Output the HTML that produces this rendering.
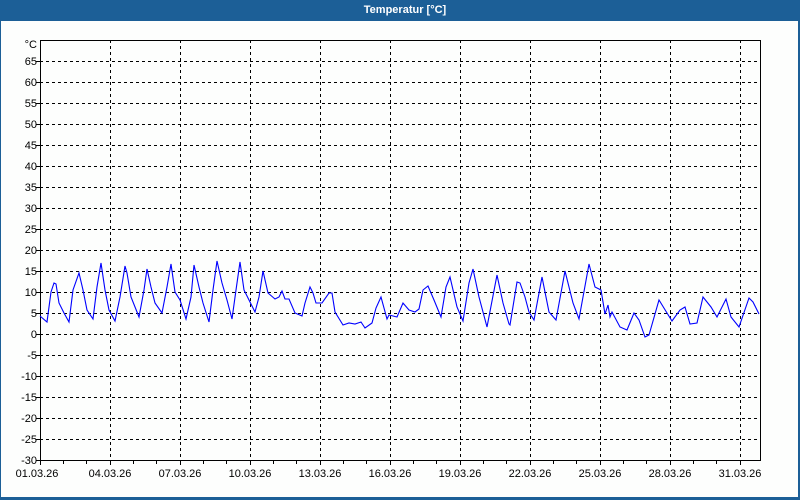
<!DOCTYPE html>
<html><head><meta charset="utf-8"><style>
html,body{margin:0;padding:0;background:#fff;}
svg{display:block;font-family:"Liberation Sans","DejaVu Sans",sans-serif;}
</style></head><body>
<svg width="800" height="500" viewBox="0 0 800 500" xmlns="http://www.w3.org/2000/svg">
<rect x="0" y="0" width="800" height="500" fill="#1c5f97"/>
<rect x="1" y="21" width="797" height="476" fill="#fdfefd"/>
<text x="405" y="13" fill="#fff" font-size="11" font-weight="bold" text-anchor="middle">Temperatur [°C]</text>
<g stroke="#000" stroke-width="1" stroke-dasharray="3,3" fill="none" shape-rendering="crispEdges">
<path d="M40 61.5H760M40 82.5H760M40 103.5H760M40 124.5H760M40 145.5H760M40 166.5H760M40 187.5H760M40 208.5H760M40 229.5H760M40 250.5H760M40 271.5H760M40 292.5H760M40 313.5H760M40 334.5H760M40 355.5H760M40 376.5H760M40 397.5H760M40 418.5H760M40 439.5H760"/>
<path d="M110.5 40V460M180.5 40V460M250.5 40V460M320.5 40V460M390.5 40V460M460.5 40V460M530.5 40V460M600.5 40V460M670.5 40V460M740.5 40V460"/>
</g>
<g stroke="#000" stroke-width="1" fill="none" shape-rendering="crispEdges">
<rect x="40.5" y="40.5" width="720" height="420"/>
<path d="M36 61.5H40M36 82.5H40M36 103.5H40M36 124.5H40M36 145.5H40M36 166.5H40M36 187.5H40M36 208.5H40M36 229.5H40M36 250.5H40M36 271.5H40M36 292.5H40M36 313.5H40M36 334.5H40M36 355.5H40M36 376.5H40M36 397.5H40M36 418.5H40M36 439.5H40M36 460.5H40"/>
<path d="M40.5 460V465M63.5 460V464M86.5 460V464M110.5 460V465M133.5 460V464M156.5 460V464M180.5 460V465M203.5 460V464M226.5 460V464M250.5 460V465M273.5 460V464M296.5 460V464M320.5 460V465M343.5 460V464M366.5 460V464M390.5 460V465M413.5 460V464M436.5 460V464M460.5 460V465M483.5 460V464M506.5 460V464M530.5 460V465M553.5 460V464M576.5 460V464M600.5 460V465M623.5 460V464M646.5 460V464M670.5 460V465M693.5 460V464M716.5 460V464M740.5 460V465"/>
</g>
<g font-size="11" fill="#000" text-anchor="end">
<text x="37" y="48">°C</text>
<text x="37" y="65">65</text><text x="37" y="86">60</text><text x="37" y="107">55</text><text x="37" y="128">50</text>
<text x="37" y="149">45</text><text x="37" y="170">40</text><text x="37" y="191">35</text><text x="37" y="212">30</text>
<text x="37" y="233">25</text><text x="37" y="254">20</text><text x="37" y="275">15</text><text x="37" y="296">10</text>
<text x="37" y="317">5</text><text x="37" y="338">0</text><text x="37" y="359">-5</text><text x="37" y="380">-10</text>
<text x="37" y="401">-15</text><text x="37" y="422">-20</text><text x="37" y="443">-25</text><text x="37" y="464">-30</text>
</g>
<g font-size="11" fill="#000" text-anchor="middle">
<text x="37" y="477">01.03.26</text><text x="110" y="477">04.03.26</text><text x="180" y="477">07.03.26</text>
<text x="250" y="477">10.03.26</text><text x="320" y="477">13.03.26</text><text x="390" y="477">16.03.26</text>
<text x="460" y="477">19.03.26</text><text x="530" y="477">22.03.26</text><text x="600" y="477">25.03.26</text>
<text x="670" y="477">28.03.26</text><text x="740" y="477">31.03.26</text>
</g>
<polyline fill="none" stroke="#0000ff" stroke-width="1.1" points="40,316 47,322 51,292 54,283 56,284 59,303 64,313 69,322 73,290 79,273 83,290 87,310 93,319 97,287 101,263 105,290 109,310 115,321 120,297 125,266 127,273 131,297 139,317 144,290 147,269 151,287 155,303 162,313 167,287 171,264 175,292 180,300 186,319 191,297 194,265 199,287 203,303 209,322 213,290 217,261 222,283 227,300 232,319 236,290 240,262 244,290 249,300 255,312 259,297 263,271 268,293 275,299 279,297 282,291 285,299 289,299 295,313 302,316 305,303 310,287 313,293 316,303 322,303 329,293 332,293 335,312 343,325 349,323 355,324 361,322 365,328 372,323 376,308 381,297 387,319 389,315 397,317 403,303 409,310 415,312 419,309 423,290 428,286 434,300 441,317 446,287 450,277 457,307 463,321 469,283 473,269 479,297 487,327 497,275 503,303 509,324 510,325 517,282 520,283 525,297 529,312 534,320 542,277 549,312 556,320 565,271 573,303 579,319 589,264 595,287 601,290 605,314 608,305 610,317 612,312 620,327 627,330 634,313 639,320 645,337 649,335 659,300 667,313 672,321 680,310 685,307 690,324 697,323 703,297 711,307 717,317 726,299 731,317 739,327 749,298 753,302 759,314"/>
</svg>
</body></html>
